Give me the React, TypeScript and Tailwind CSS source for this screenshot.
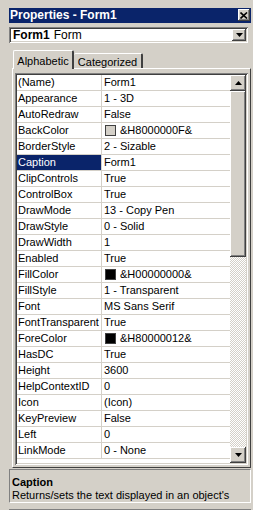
const rows: [string, string, string?][] = [
  ["(Name)", "Form1"],
  ["Appearance", "1 - 3D"],
  ["AutoRedraw", "False"],
  ["BackColor", "&H8000000F&", "#d4d0c8"],
  ["BorderStyle", "2 - Sizable"],
  ["Caption", "Form1"],
  ["ClipControls", "True"],
  ["ControlBox", "True"],
  ["DrawMode", "13 - Copy Pen"],
  ["DrawStyle", "0 - Solid"],
  ["DrawWidth", "1"],
  ["Enabled", "True"],
  ["FillColor", "&H00000000&", "#000000"],
  ["FillStyle", "1 - Transparent"],
  ["Font", "MS Sans Serif"],
  ["FontTransparent", "True"],
  ["ForeColor", "&H80000012&", "#000000"],
  ["HasDC", "True"],
  ["Height", "3600"],
  ["HelpContextID", "0"],
  ["Icon", "(Icon)"],
  ["KeyPreview", "False"],
  ["Left", "0"],
  ["LinkMode", "0 - None"],
];

const raised =
  "shadow-[inset_-1px_-1px_#404040,inset_1px_1px_#ffffff,inset_-2px_-2px_#808080,inset_2px_2px_#d4d0c8]";
const sunken =
  "shadow-[inset_1px_1px_#808080,inset_-1px_-1px_#ffffff,inset_2px_2px_#404040,inset_-2px_-2px_#d4d0c8]";

function Arrow({ up }: { up?: boolean }) {
  return (
    <svg width="7" height="4" viewBox="0 0 7 4">
      {up ? <path d="M3.5 0 L7 4 L0 4 Z" fill="#000" /> : <path d="M0 0 L7 0 L3.5 4 Z" fill="#000" />}
    </svg>
  );
}

export default function App() {
  return (
    <div
      className="w-[253px] h-[510px] bg-[#d4d0c8] text-[11px] text-black flex flex-col pt-[8px] pl-[9px] pr-[2px] overflow-hidden"
      style={{ fontFamily: '"Liberation Sans", Arial, sans-serif' }}
    >
      {/* Title bar */}
      <div className="h-[15px] bg-[#0a246a] flex items-center justify-between pl-[1px] pr-[1px]">
        <span className="text-white font-bold text-[12px] leading-none">Properties - Form1</span>
        <div className={`w-[12px] h-[12px] bg-[#d4d0c8] flex items-center justify-center ${raised}`}>
          <svg width="8" height="7" viewBox="0 0 8 7">
            <path d="M0.5 0.5 L7 6.5 M7 0.5 L0.5 6.5" stroke="#000" strokeWidth="1.6" />
          </svg>
        </div>
      </div>

      {/* Object combo */}
      <div className={`mt-[4px] mr-[3px] h-[16px] bg-white flex items-center pl-[4px] pr-[2px] text-[12px] ${sunken}`}>
        <span className="font-bold">Form1</span>
        <span className="ml-[4px]">Form</span>
        <div className={`ml-auto w-[14px] h-[12px] bg-[#d4d0c8] flex items-center justify-center ${raised}`}>
          <Arrow />
        </div>
      </div>

      {/* Tabs */}
      <div className="mt-[6px] ml-[4px] flex items-end h-[20px]">
        <div className="relative z-10 h-[19px] w-[61px] bg-[#d4d0c8] border-l border-t border-white border-r-2 border-r-[#404040] rounded-t-[2px] flex items-center justify-center pt-[1px] mb-[-1px]">
          Alphabetic
        </div>
        <div className="h-[15px] w-[69px] bg-[#d4d0c8] border-t border-white border-r-2 border-r-[#404040] rounded-t-[2px] flex items-center justify-center pt-[2px]">
          Categorized
        </div>
      </div>

      {/* Tab panel */}
      <div className="ml-[3px] h-[400px] border-l border-t border-white border-r border-b border-r-[#404040] border-b-[#404040] pt-[4px] pl-[2px] pr-[2px] pb-[2px]">
        <div className={`h-[392px] bg-white p-[2px] flex ${sunken}`}>
          <div className="flex-1 flex flex-col overflow-hidden">
            {rows.map(([name, value, swatch]) => (
              <div key={name} className="h-[16px] shrink-0 flex border-b border-[#d4d0c8]">
                <div
                  className={`w-[85px] shrink-0 border-r border-[#d4d0c8] pl-[1px] leading-[15px] ${
                    name === "Caption" ? "bg-[#0a246a] text-white" : ""
                  }`}
                >
                  {name}
                </div>
                <div className="flex items-center pl-[2px] leading-[15px]">
                  {swatch && (
                    <span
                      className="w-[11px] h-[11px] border border-[#404040] mr-[4px] ml-[1px]"
                      style={{ background: swatch }}
                    />
                  )}
                  {value}
                </div>
              </div>
            ))}
          </div>
          {/* Scrollbar */}
          <div className="w-[16px] shrink-0 flex flex-col bg-[repeating-conic-gradient(#ffffff_0_25%,#d4d0c8_0_50%)] bg-[length:2px_2px]">
            <div className={`h-[16px] bg-[#d4d0c8] flex items-center justify-center ${raised}`}>
              <Arrow up />
            </div>
            <div className={`h-[166px] bg-[#d4d0c8] ${raised}`} />
            <div className="flex-1" />
            <div className={`h-[16px] bg-[#d4d0c8] flex items-center justify-center ${raised}`}>
              <Arrow />
            </div>
          </div>
        </div>
      </div>

      {/* Description */}
      <div className="mt-[1px] h-[34px] border-t border-l border-[#808080] border-b border-r border-b-white border-r-white pl-[2px] pt-[6px] leading-[13px] overflow-hidden whitespace-nowrap">
        <div className="font-bold">Caption</div>
        <div>Returns/sets the text displayed in an object's</div>
      </div>
      <div className="mt-[6px] border-t border-[#808080]" />
    </div>
  );
}
